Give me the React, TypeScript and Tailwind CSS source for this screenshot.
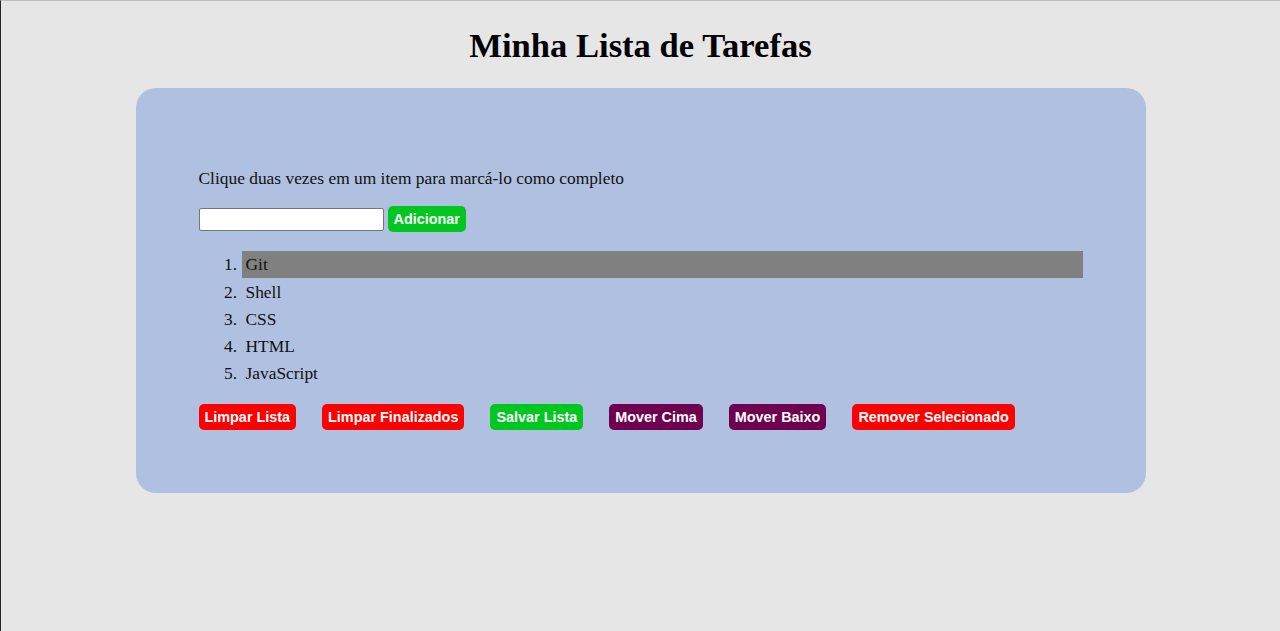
import React from "react";

const items = ["Git", "Shell", "CSS", "HTML", "JavaScript"];

export default function App() {
  const btn =
    "text-white font-bold text-[14.4px] leading-[16px] px-[6px] py-[5px] rounded-[5px] [font-family:'Liberation_Sans',Arial,sans-serif]";
  return (
    <div className="min-h-[631px] bg-[#e6e6e6] border-t border-t-[#bdbdbd] border-l border-l-[#2a2128] [font-family:'Liberation_Serif','Times_New_Roman',serif] text-black">
      <h1 className="text-[34.6px] font-bold text-center leading-[40px] pt-[24px] mb-[23px]">
        Minha Lista de Tarefas
      </h1>
      <div className="w-[1010px] mx-auto bg-[#b0c0e0] rounded-[20px] pl-[63px] pr-[63px] pt-[80px] pb-[63px]">
        <p className="text-[17.4px] leading-[20px] text-[#111]">
          Clique duas vezes em um item para marcá-lo como completo
        </p>
        <div className="flex items-center gap-[4px] mt-[18px]">
          <input
            type="text"
            className="w-[185px] h-[23px] bg-white border border-[#767676] rounded-[2px]"
          />
          <button className={`${btn} bg-[#00c71f]`}>Adicionar</button>
        </div>
        <ol className="list-decimal pl-[43px] mt-[19px] text-[17.4px] text-[#111]">
          {items.map((it, i) => (
            <li
              key={it}
              className={`pl-[4px] h-[27px] leading-[27px] marker:text-[#111] ${
                i === 0 ? "bg-[#808080] h-[26px] leading-[26px] mb-[1px]" : ""
              }`}
            >
              {it}
            </li>
          ))}
        </ol>
        <div className="flex items-center gap-[26px] mt-[17px]">
          <button className={`${btn} bg-[#ff0000]`}>Limpar Lista</button>
          <button className={`${btn} bg-[#ff0000]`}>Limpar Finalizados</button>
          <button className={`${btn} bg-[#00c71f]`}>Salvar Lista</button>
          <button className={`${btn} bg-[#6f004f]`}>Mover Cima</button>
          <button className={`${btn} bg-[#6f004f]`}>Mover Baixo</button>
          <button className={`${btn} bg-[#ff0000]`}>Remover Selecionado</button>
        </div>
      </div>
    </div>
  );
}
